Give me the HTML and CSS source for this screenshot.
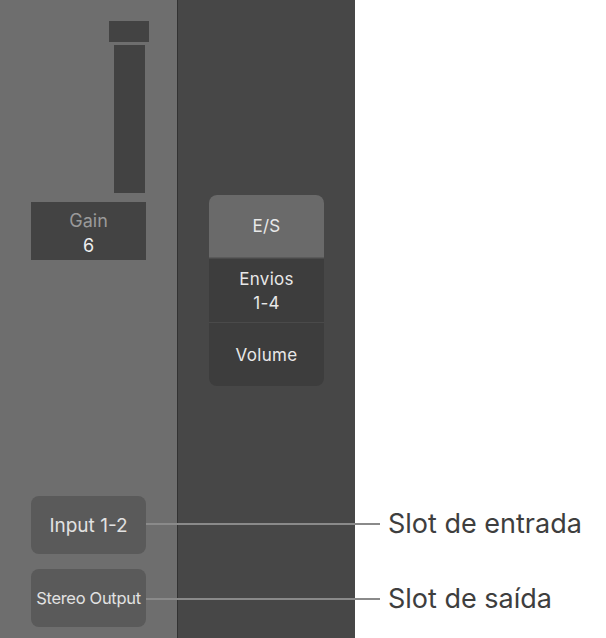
FILE: index.html
```html
<!DOCTYPE html>
<html lang="pt">
<head>
  <meta charset="UTF-8">
  <title>Canal do mixer</title>
  <link rel="stylesheet" href="styles.css">
</head>
<body>
  <div class="figure">
    <div class="mixer">
      <div class="strip strip-left">
        <div class="fader">
          <div class="fader-cap"></div>
          <div class="fader-track"></div>
        </div>
        <div class="gain">
          <span class="gain-label">Gain</span>
          <span class="gain-value">6</span>
        </div>
        <div class="slots">
          <div class="slot">Input 1-2</div>
          <div class="slot slot-small">Stereo Output</div>
        </div>
      </div>
      <div class="strip strip-right">
        <div class="segments">
          <div class="segment active">E/S</div>
          <div class="segment">Envios<br>1-4</div>
          <div class="segment">Volume</div>
        </div>
      </div>
    </div>

    <!-- callout lines over the slots -->
    <div class="callout callout-in">
      <span class="callout-line"></span>
      <span class="callout-text">Slot de entrada</span>
    </div>
    <div class="callout callout-out">
      <span class="callout-line"></span>
      <span class="callout-text">Slot de saída</span>
    </div>
  </div>
</body>
</html>
```

FILE: styles.css
```css
body {
  margin: 0;
  background: #fff;
  font-family: Inter, "Noto Sans", sans-serif;
}
.figure {
  position: relative;
  width: 606px;
  height: 638px;
  overflow: hidden;
}
.mixer {
  display: flex;
  width: 355px;
  height: 638px;
}
.strip {
  box-sizing: border-box;
  height: 100%;
}
.strip-left {
  width: 178px;
  background: #6e6e6e;
  border-right: 1px solid #323232;
  padding: 21px 0 0 31px;
  display: flex;
  flex-direction: column;
}
.strip-right {
  flex: 1;
  background: #474747;
  padding: 195px 0 0 31px;
}
.fader {
  display: flex;
  flex-direction: column;
  align-items: flex-start;
  padding-left: 78px;
  gap: 3px;
}
.fader-cap {
  width: 40px;
  height: 21px;
  background: #434343;
}
.fader-track {
  width: 31px;
  height: 148px;
  margin-left: 5px;
  background: #424242;
}
.gain {
  margin-top: 9px;
  width: 115px;
  height: 58px;
  background: #434343;
  display: flex;
  flex-direction: column;
  align-items: center;
  justify-content: center;
  padding-top: 3px;
  box-sizing: border-box;
  line-height: 25px;
}
.gain-label {
  color: #9a9a9a;
  font-size: 18px;
}
.gain-value {
  color: #eee;
  font-size: 18px;
}
.slots {
  margin-top: 236px;
  display: flex;
  flex-direction: column;
  gap: 15px;
}
.slot {
  width: 115px;
  height: 58px;
  border-radius: 8px;
  background: #5a5a5a;
  color: #e2e2e2;
  font-size: 19px;
  display: flex;
  align-items: center;
  justify-content: center;
}
.slot-small {
  font-size: 16.5px;
  letter-spacing: -0.3px;
}
.segments {
  width: 115px;
  border-radius: 8px;
  overflow: hidden;
  background: #3d3d3d;
}
.segment {
  height: 63px;
  display: flex;
  align-items: center;
  justify-content: center;
  text-align: center;
  color: #e8e8e8;
  font-size: 17px;
  letter-spacing: 0.3px;
  line-height: 24px;
  border-top: 1px solid #4a4a4a;
}
.segment.active {
  height: 62px;
  background: #6a6a6a;
  border-top: none;
  border-bottom: 1px solid #5a5a5a;
}
.callout {
  position: absolute;
  left: 146px;
  display: flex;
  align-items: center;
  gap: 8px;
}
.callout-in {
  top: 507px;
}
.callout-out {
  top: 582px;
}
.callout-line {
  width: 234px;
  height: 2px;
  background: #8a8a8a;
}
.callout-text {
  color: #3e3e3e;
  font-size: 27px;
  line-height: 34px;
}
```
